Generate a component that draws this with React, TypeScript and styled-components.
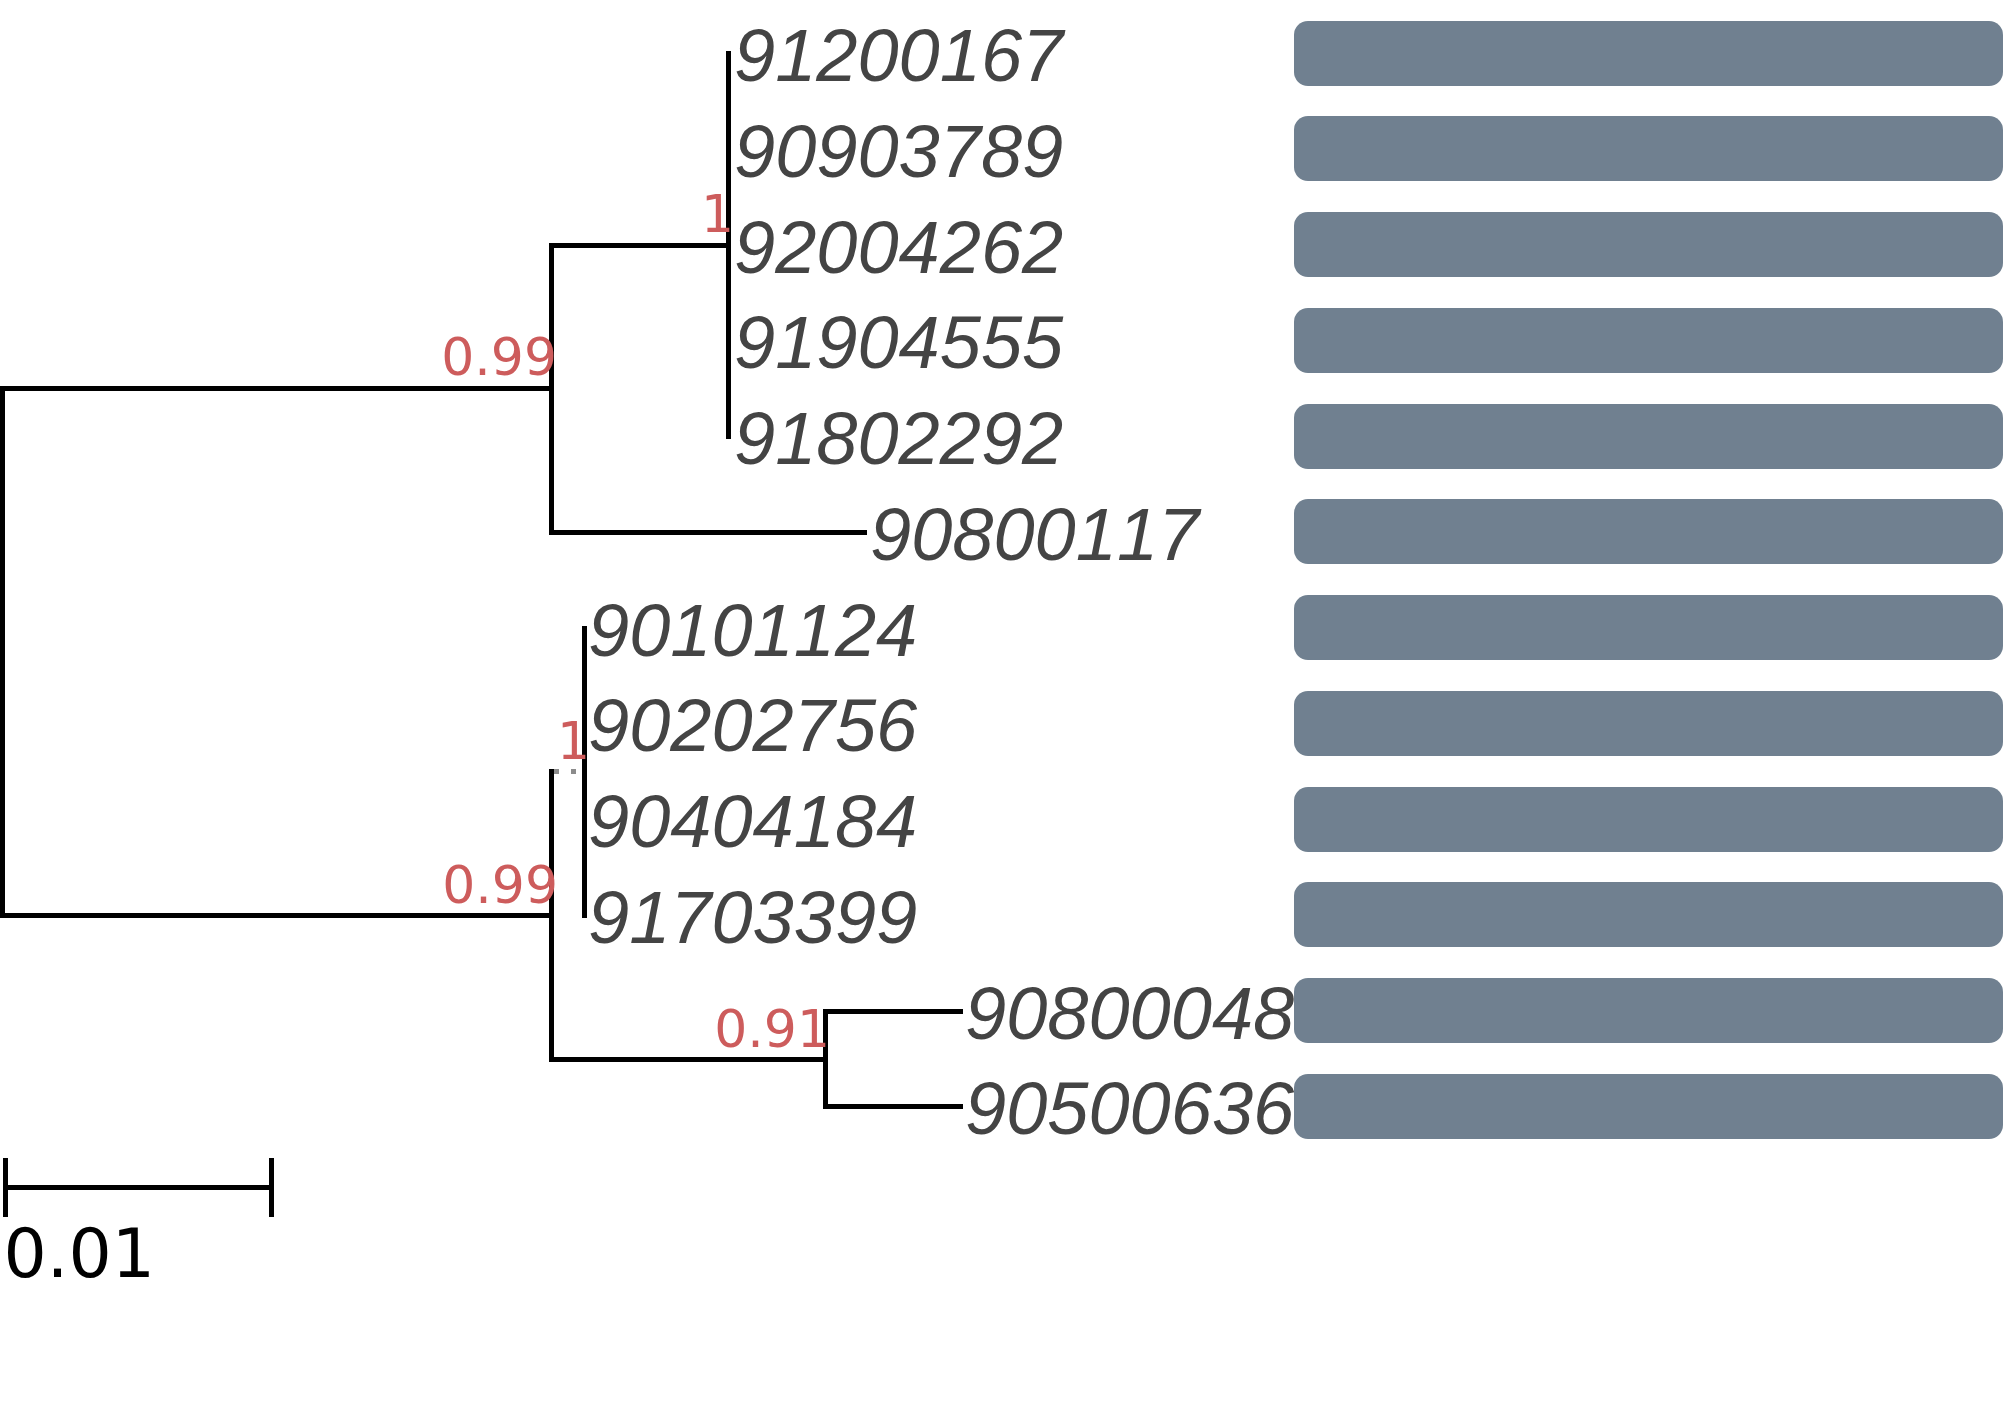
import React from "react";
import styled, { createGlobalStyle } from "styled-components";

const GlobalStyle = createGlobalStyle`
  html, body {
    margin: 0;
    padding: 0;
    background: #ffffff;
  }
  body {
    width: 2007px;
    height: 1427px;
    overflow: hidden;
  }
`;

const ROW0 = 53.2;
const PITCH = 95.75;
const rowY = (i: number) => Math.round(ROW0 + PITCH * i);

type Leaf = { name: string; x: number };

const leaves: Leaf[] = [
  { name: "91200167", x: 734 },
  { name: "90903789", x: 734 },
  { name: "92004262", x: 734 },
  { name: "91904555", x: 734 },
  { name: "91802292", x: 734 },
  { name: "90800117", x: 870 },
  { name: "90101124", x: 588 },
  { name: "90202756", x: 588 },
  { name: "90404184", x: 588 },
  { name: "91703399", x: 588 },
  { name: "90800048", x: 965 },
  { name: "90500636", x: 965 },
];

type Support = { value: string; x: number; y: number };

const supports: Support[] = [
  { value: "1", x: 734, y: 232 },
  { value: "0.99", x: 557, y: 375 },
  { value: "1", x: 590, y: 759 },
  { value: "0.99", x: 558, y: 903 },
  { value: "0.91", x: 830, y: 1047 },
];

const nodeA = { x: 728.5, y: rowY(2) + 0.5 };
const nodeB = { x: 551.5, y: 388.5 };
const nodeD = { x: 584, y: 771.5 };
const nodeE = { x: 825, y: 1059.5 };
const nodeC = { x: 551.5, y: 915.5 };
const root = { x: 2.5 };

const Page = styled.div`
  display: flex;
  flex-direction: column;
  width: 2007px;
  height: 1427px;
  background: #ffffff;
`;

const Chart = styled.div`
  display: flex;
  align-items: flex-start;
`;

const TreeSvg = styled.svg`
  display: block;
  flex: none;
  overflow: visible;
`;

const Branch = styled.path`
  fill: none;
  stroke: #000000;
  stroke-width: 5;
  stroke-linejoin: miter;
  shape-rendering: crispEdges;
`;

const CladeLine = styled.path`
  fill: none;
  stroke: #000000;
  stroke-width: 5;
  stroke-linecap: square;
  shape-rendering: crispEdges;
`;

const DottedBranch = styled.path`
  fill: none;
  stroke: #8c8c8c;
  stroke-width: 5;
  stroke-dasharray: 5 12;
  shape-rendering: crispEdges;
`;

const LeafLabel = styled.text`
  font-family: "Liberation Sans", Arial, sans-serif;
  font-style: italic;
  font-size: 74px;
  font-kerning: none;
  fill: #444444;
`;

const SupportLabel = styled.text`
  font-family: "DejaVu Sans", Verdana, sans-serif;
  font-size: 52px;
  font-kerning: none;
  fill: #cd5c5c;
  text-anchor: end;
`;

const BarList = styled.div`
  display: flex;
  flex-direction: column;
  gap: 30.75px;
  padding-top: 20.7px;
  width: 709.5px;
  flex: none;
`;

const Bar = styled.div`
  height: 65px;
  background: #708090;
  border-radius: 14px;
`;

const ScaleBlock = styled.div`
  display: flex;
  flex-direction: column;
  align-items: flex-start;
  margin-top: 18px;
`;

const ScaleSvg = styled.svg`
  display: block;
`;

const ScaleLine = styled.path`
  fill: none;
  stroke: #000000;
  stroke-width: 5;
  shape-rendering: crispEdges;
`;

const ScaleLabel = styled.div`
  font-family: "DejaVu Sans", Verdana, sans-serif;
  font-size: 68px;
  line-height: 1;
  color: #000000;
  margin-top: 2px;
  padding-left: 3.5px;
`;

export default function App() {
  return (
    <>
      <GlobalStyle />
      <Page>
        <Chart>
          <TreeSvg width={1293.5} height={1140} viewBox="0 0 1293.5 1140">
            <Branch
              d={`M ${nodeB.x} ${nodeB.y} H ${root.x} V ${nodeC.y} H ${nodeC.x}`}
            />
            <Branch
              d={`M ${nodeA.x} ${nodeA.y} H ${nodeB.x} V ${rowY(5) + 0.5} H 867`}
            />
            <CladeLine d={`M ${nodeA.x} ${rowY(0)} V ${rowY(4)}`} />
            <Branch
              d={`M ${nodeC.x} ${nodeD.y - 2.5} V ${nodeE.y} H ${nodeE.x}`}
            />
            <DottedBranch d={`M 554 ${nodeD.y} H ${nodeD.x - 1}`} />
            <CladeLine d={`M ${nodeD.x} ${rowY(6)} V ${rowY(9)}`} />
            <Branch
              d={`M 963 ${rowY(10) + 0.5} H ${nodeE.x} V ${rowY(11) + 0.5} H 963`}
            />
            {leaves.map((leaf, i) => (
              <LeafLabel key={leaf.name} x={leaf.x} y={rowY(i) + 27.5}>
                {leaf.name}
              </LeafLabel>
            ))}
            {supports.map((s, i) => (
              <SupportLabel key={i} x={s.x} y={s.y}>
                {s.value}
              </SupportLabel>
            ))}
          </TreeSvg>
          <BarList>
            {leaves.map((leaf) => (
              <Bar key={leaf.name} />
            ))}
          </BarList>
        </Chart>
        <ScaleBlock>
          <ScaleSvg width={280} height={60} viewBox="0 0 280 60">
            <ScaleLine d="M 5 29.5 H 271.5" />
            <ScaleLine d="M 5 0 V 59" />
            <ScaleLine d="M 271.5 0 V 59" />
          </ScaleSvg>
          <ScaleLabel>0.01</ScaleLabel>
        </ScaleBlock>
      </Page>
    </>
  );
}
